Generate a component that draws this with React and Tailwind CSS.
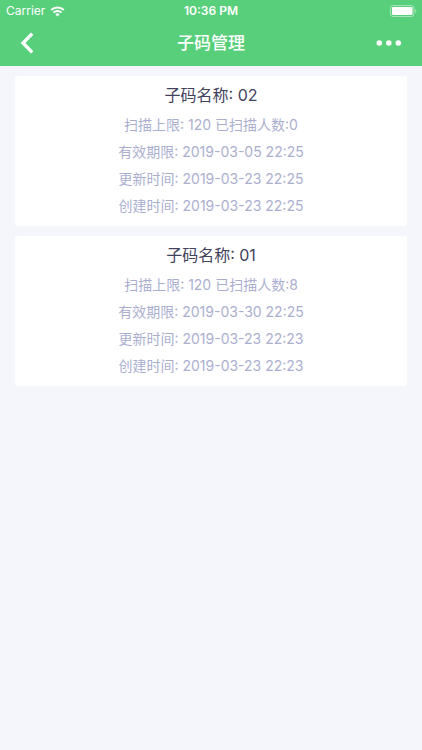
import React from 'react';

const codes = [
    {
        id: 2,
        name: '02',
        limit: 120,
        scanned: 0,
        expires: '2019-03-05 22:25',
        updated: '2019-03-23 22:25',
        created: '2019-03-23 22:25',
    },
    {
        id: 1,
        name: '01',
        limit: 120,
        scanned: 8,
        expires: '2019-03-30 22:25',
        updated: '2019-03-23 22:23',
        created: '2019-03-23 22:23',
    },
];

const WifiIcon = () => (
    <svg width="15" height="11" viewBox="0 0 14 11" fill="none" stroke="currentColor" strokeWidth="2">
        <path d="M0.7 4a9 9 0 0 1 12.6 0" />
        <path d="M3 6.6a5.7 5.7 0 0 1 8 0" />
        <path d="M7 10.6 4.9 8.4a3 3 0 0 1 4.2 0Z" fill="currentColor" stroke="none" />
    </svg>
);

const BatteryIcon = () => (
    <svg width="27" height="12" viewBox="0 0 27 12" fill="none">
        <rect x="0.5" y="0.5" width="23.5" height="11" rx="2.6" stroke="white" strokeOpacity="0.45" />
        <rect x="2" y="2" width="20.5" height="8" rx="1.2" fill="white" />
        <path d="M25.2 4v4c1.6-.6 1.6-3.4 0-4Z" fill="white" fillOpacity="0.45" />
    </svg>
);

const StatusBar = () => (
    <div className="grid grid-cols-3 items-center h-[22px] px-[5px] text-[12px]">
        <div className="flex items-center gap-[5px] pl-px">
            <span>Carrier</span>
            <WifiIcon />
        </div>
        <span className="text-center text-[12px] font-semibold">10:36 PM</span>
        <div className="flex justify-end">
            <BatteryIcon />
        </div>
    </div>
);

const NavBar = () => (
    <div className="flex items-center justify-between h-11 px-5 pb-0.5">
        <button type="button" aria-label="返回" className="w-7">
            <svg width="14" height="22" viewBox="0 0 14 22" fill="none" stroke="currentColor" strokeWidth="3.4">
                <path d="M12.2 1.6 3 11l9.2 9.4" />
            </svg>
        </button>
        <h1 className="text-[17px] leading-7 font-medium">子码管理</h1>
        <button type="button" aria-label="更多" className="flex justify-end w-7">
            <svg width="26" height="6" viewBox="0 0 26 6" fill="currentColor">
                <circle cx="3.3" cy="3" r="2.8" />
                <circle cx="12.8" cy="3" r="2.8" />
                <circle cx="22.3" cy="3" r="2.8" />
            </svg>
        </button>
    </div>
);

const CodeCard = ({ code }) => (
    <li className="bg-white rounded-xs pt-1 pb-[7px] text-center text-[14px] leading-[27px] text-[#abafcf]">
        <h2 className="text-[16px] leading-[31px] text-[#43425d]">子码名称: {code.name}</h2>
        <p>扫描上限: {code.limit} 已扫描人数:{code.scanned}</p>
        <p>有效期限: {code.expires}</p>
        <p>更新时间: {code.updated}</p>
        <p>创建时间: {code.created}</p>
    </li>
);

const App = () => {
    return (
        <div className="min-h-screen bg-[#f5f6fb] font-['Inter','Noto_Sans_CJK_SC',sans-serif]">
            <header className="bg-[#58cf7b] text-white">
                <StatusBar />
                <NavBar />
            </header>
            <ul className="flex flex-col gap-2.5 px-[15px] py-2.5">
                {codes.map(code => (
                    <CodeCard key={code.id} code={code} />
                ))}
            </ul>
        </div>
    );
};

export default App;
